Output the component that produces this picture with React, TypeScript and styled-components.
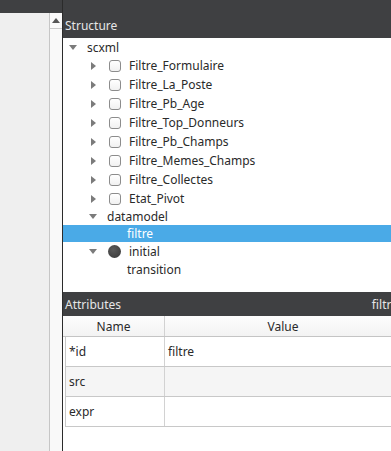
import styled, { createGlobalStyle } from 'styled-components';

const Global = createGlobalStyle`
  html, body { margin: 0; padding: 0; background: #efefef; }
  body { font-family: "Noto Sans", "Open Sans", sans-serif; font-size: 12px; color: #2a2a2a; }
  * { box-sizing: border-box; }
`;

const Screen = styled.div`
  width: 391px;
  height: 451px;
  overflow: hidden;
  display: flex;
  flex-direction: column;
  background: #efefef;
`;

const TopStrip = styled.div`
  height: 13px;
  flex: none;
  background: #3f4042;
`;

const Body = styled.div`
  flex: 1;
  display: flex;
  min-height: 0;
`;

const LeftPanel = styled.div`
  width: 50px;
  flex: none;
  background: #efefef;
  border-right: 1px solid #c6c6c6;
`;

const ScrollStrip = styled.div`
  width: 12px;
  flex: none;
  background: #f9f9f9;
  display: flex;
  flex-direction: column;
`;

const ScrollButton = styled.div`
  height: 16px;
  border-bottom: 1px solid #c8c8c8;
  display: flex;
  align-items: center;
  justify-content: center;
`;

const RightColumn = styled.div`
  width: 341px;
  flex: none;
  border-left: 1px solid #2b2b2b;
  display: flex;
  flex-direction: column;
  background: #fff;
  margin-top: -13px;
`;

const DockHeader = styled.div<{ $h: number; $bottom?: boolean }>`
  height: ${p => p.$h}px;
  flex: none;
  background: #3f4042;
  color: #e6e6e6;
  display: flex;
  align-items: ${p => (p.$bottom ? 'flex-end' : 'center')};
  justify-content: space-between;
  padding: 0 5px ${p => (p.$bottom ? 4 : 0)}px 2px;
  white-space: nowrap;
`;

const Tree = styled.div`
  height: 254px;
  flex: none;
  padding-top: 1px;
  background: #fff;
`;

const Row = styled.div<{ $h: number; $level: number; $selected?: boolean }>`
  height: ${p => p.$h}px;
  display: flex;
  align-items: center;
  padding-left: ${p => p.$level * 20}px;
  background: ${p => (p.$selected ? '#4aaae7' : 'transparent')};
  color: ${p => (p.$selected ? '#fff' : '#2a2a2a')};
  white-space: nowrap;
`;

const ArrowSlot = styled.span`
  width: 20px;
  flex: none;
  display: flex;
  align-items: center;
  justify-content: center;
`;

const CheckBox = styled.span`
  width: 12px;
  height: 12px;
  margin-left: 6px;
  margin-right: 8px;
  border: 1px solid #8c8c8c;
  border-radius: 3px;
  background: linear-gradient(#ffffff, #f1f1f1);
  flex: none;
`;

const Dot = styled.span`
  width: 13px;
  height: 13px;
  margin-left: 5px;
  margin-right: 8px;
  border-radius: 50%;
  background: radial-gradient(circle at 40% 35%, #5a5a5a, #363636);
  flex: none;
`;

const Label = styled.span<{ $plain?: boolean }>`
  margin-left: ${p => (p.$plain ? 4 : 0)}px;
`;

const Table = styled.div`
  flex: 1;
  background: #fff;
  display: flex;
  flex-direction: column;
`;

const HeadRow = styled.div`
  height: 21px;
  display: flex;
  background: linear-gradient(#fdfdfd, #f3f3f3);
  border-bottom: 1px solid #c4c4c4;
`;

const Cell = styled.div<{ $w: number; $center?: boolean; $last?: boolean }>`
  width: ${p => p.$w}px;
  flex: none;
  display: flex;
  align-items: center;
  justify-content: ${p => (p.$center ? 'center' : 'flex-start')};
  padding-left: ${p => (p.$center ? 0 : 3)}px;
  border-right: ${p => (p.$last ? 'none' : '1px solid #d2d2d2')};
`;

const Rows = styled.div`
  margin-left: 2px;
  border-left: 1px solid #c8c8c8;
  width: max-content;
`;

const DataRow = styled.div<{ $alt?: boolean }>`
  height: 30px;
  display: flex;
  background: ${p => (p.$alt ? '#f5f5f5' : '#fff')};
  border-bottom: 1px solid #c8c8c8;
`;

const RightArrow = () => (
  <svg width="5" height="8" viewBox="0 0 5 8">
    <polygon points="0,0 5,4 0,8" fill="#7b7b7b" />
  </svg>
);

const DownArrow = () => (
  <svg width="8" height="5" viewBox="0 0 8 5">
    <polygon points="0,0 8,0 4,5" fill="#7b7b7b" />
  </svg>
);

const FilterIcon = () => (
  <svg width="14" height="11" viewBox="0 0 14 11" style={{ marginRight: -8, marginBottom: 1 }}>
    <polygon points="0,0 10,0 10,2 6.5,5 6.5,10 4.5,10 4.5,5 1,2 0,2" fill="#d0d0d0" />
    <rect x="9" y="8" width="5" height="1.5" fill="#d0d0d0" />
  </svg>
);

const filters = [
  'Filtre_Formulaire',
  'Filtre_La_Poste',
  'Filtre_Pb_Age',
  'Filtre_Top_Donneurs',
  'Filtre_Pb_Champs',
  'Filtre_Memes_Champs',
  'Filtre_Collectes',
  'Etat_Pivot',
];

const attrs = [
  { name: '*id', value: 'filtre' },
  { name: 'src', value: '' },
  { name: 'expr', value: '' },
];

export default function App() {
  return (
    <Screen>
      <Global />
      <TopStrip />
      <Body>
        <LeftPanel />
        <ScrollStrip>
          <ScrollButton>
            <svg width="8" height="5" viewBox="0 0 8 5">
              <polygon points="0,5 8,5 4,0" fill="#555" />
            </svg>
          </ScrollButton>
        </ScrollStrip>
        <RightColumn>
          <DockHeader $h={38} $bottom>
            <span>Structure</span>
            <FilterIcon />
          </DockHeader>
          <Tree>
            <Row $h={17} $level={0}>
              <ArrowSlot><DownArrow /></ArrowSlot>
              <Label $plain>scxml</Label>
            </Row>
            {filters.map(f => (
              <Row key={f} $h={19} $level={1}>
                <ArrowSlot><RightArrow /></ArrowSlot>
                <CheckBox />
                <Label>{f}</Label>
              </Row>
            ))}
            <Row $h={17} $level={1}>
              <ArrowSlot><DownArrow /></ArrowSlot>
              <Label $plain>datamodel</Label>
            </Row>
            <Row $h={17} $level={2} $selected>
              <ArrowSlot />
              <Label $plain>filtre</Label>
            </Row>
            <Row $h={19} $level={1}>
              <ArrowSlot><DownArrow /></ArrowSlot>
              <Dot />
              <Label>initial</Label>
            </Row>
            <Row $h={17} $level={2}>
              <ArrowSlot />
              <Label $plain>transition</Label>
            </Row>
          </Tree>
          <DockHeader $h={24}>
            <span>Attributes</span>
            <span>filtre</span>
          </DockHeader>
          <Table>
            <HeadRow>
              <Cell $w={102} $center>Name</Cell>
              <Cell $w={236} $center $last>Value</Cell>
            </HeadRow>
            <Rows>
              {attrs.map((a, i) => (
                <DataRow key={a.name} $alt={i % 2 === 1}>
                  <Cell $w={99}>{a.name}</Cell>
                  <Cell $w={236} $last>{a.value}</Cell>
                </DataRow>
              ))}
            </Rows>
          </Table>
        </RightColumn>
      </Body>
    </Screen>
  );
}
